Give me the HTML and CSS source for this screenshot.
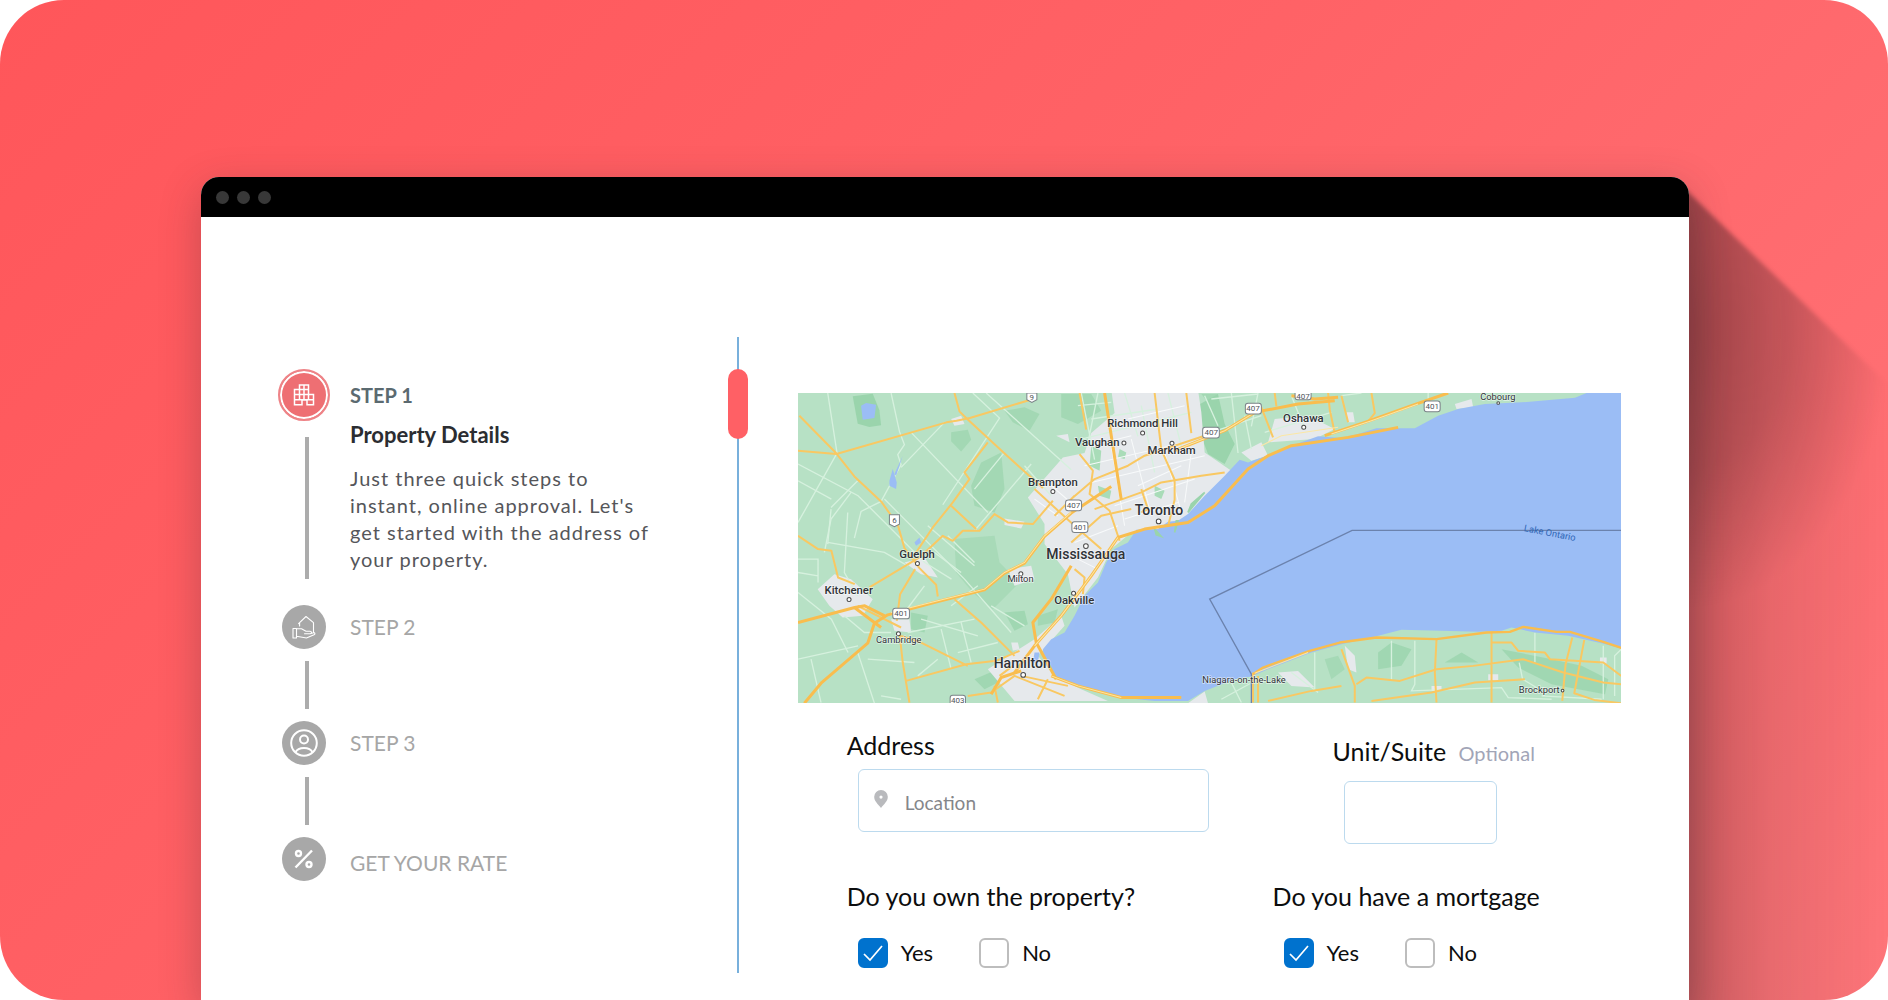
FILE: index.html
```html
<!DOCTYPE html>
<html lang="en">
<head>
<meta charset="utf-8">
<meta name="viewport" content="width=device-width, initial-scale=1">
<title>Property Details</title>
<link rel="stylesheet" href="styles.css">
</head>
<body>
<div class="stage">
  <div class="frame">
    <div class="long-shadow"></div>
    <div class="window">
      <header class="titlebar"><span class="dot"></span><span class="dot"></span><span class="dot"></span></header>
      <div class="content">
        <nav class="steps" aria-label="Application steps">
          <ol class="step-list">
            <li class="step step-active">
              <div class="marker">
                <span class="badge badge-active">
                  <svg width="26" height="26" viewBox="0 0 26 26" fill="none" stroke="#fff" stroke-width="1.5">
                    <path d="M8.500 7.500V3h9v9.500h5v10.200h-6.500V18h-5v4.700H3.500V7.500zM13 3v15M8.500 7.500V18M17.500 12.500V18M8.500 7.500h9M3.500 12.500h14M3.500 17.700h19"/>
                  </svg>
                </span>
                <span class="line"></span>
              </div>
              <div class="step-text">
                <p class="step-name">STEP 1</p>
                <h1 class="step-title">Property Details</h1>
                <p class="step-copy">Just three quick steps to<br>instant, online approval. Let's<br>get started with the address of<br>your property.</p>
              </div>
            </li>
            <li class="step">
              <div class="marker">
                <span class="badge">
                  <svg width="26" height="26" viewBox="0 0 26 26" fill="none" stroke="#fff" stroke-width="1.1" stroke-linejoin="round" stroke-linecap="round">
                    <path d="M8.600 12V8.600L15 2.500l7.500 6.200V18M8.600 8.600l-1 1M2 14.500h3.500V24H2zM5.500 14.800h5l4.500 2.400h4c2 0 2 2.600 0 2.600h-5.500M20 19.500l2.500-.8c1.500-.2 2 1.300.5 2.100L15.500 24 5.500 22.200"/>
                  </svg>
                </span>
                <span class="line"></span>
              </div>
              <div class="step-text"><p class="step-name">STEP 2</p></div>
            </li>
            <li class="step">
              <div class="marker">
                <span class="badge">
                  <svg width="30" height="30" viewBox="0 0 30 30" fill="none" stroke="#fff" stroke-width="2">
                    <circle cx="15" cy="15" r="12.800"/><circle cx="15" cy="11.500" r="4"/><path d="M6.500 24.200c1.500-3 5-4.200 8.500-4.200s7 1.200 8.500 4.200"/>
                  </svg>
                </span>
                <span class="line"></span>
              </div>
              <div class="step-text"><p class="step-name">STEP 3</p></div>
            </li>
            <li class="step step-last">
              <div class="marker">
                <span class="badge">
                  <svg width="24" height="24" viewBox="0 0 24 24" fill="none" stroke="#fff" stroke-width="2.400">
                    <circle cx="6.500" cy="6.500" r="2.500"/><circle cx="17" cy="17.500" r="2.500"/><path d="M20 3.500l-16.500 17"/>
                  </svg>
                </span>
              </div>
              <div class="step-text"><p class="step-name">GET YOUR RATE</p></div>
            </li>
          </ol>
        </nav>

        <div class="divider"><span class="pill"></span></div>

        <main class="details">
          <svg class="map" viewBox="21 22 2468 930" role="img" aria-label="Map of Lake Ontario and Toronto">
            <rect x="21" y="22" width="2468" height="930" fill="#b7e1c5"/>
            <g fill="#9ad4ac">
              <path d="M185 32l60-8 20 50 5 45-35 5-35-10z"/>
              <path d="M570 230l60-30 10 110-30 70-60-20-10-60z" opacity=".7"/>
              <path d="M480 140l50-8 10 30-30 35-30-30zM640 75l60-10 45 20-30 50-50-25z" opacity=".7"/>
              <path d="M490 460l120-10 15 80 60 60-80 80-60-50-50-60z" opacity=".5"/>
              <path d="M360 680l50 10-10 50-40-10zM640 680l60-5 10 40-40 20zM550 880l70-30 20 30-60 30z" opacity=".8"/>
              <path d="M1200 70l80-45 20 90 30 60-30 60-50-30z"/>
              <path d="M740 690l60-20-10 40-50 10zM1230 25l50 0-10 50zM810 25l90 0 30 50-70 40-50-20z" opacity=".7"/>
              <path d="M1760 800l40-30 60 20-30 50-70 10zM1960 830l50-30 50 30zM2130 790l150 30 90 20 80 40-10 45-160-30-100-50z" opacity=".8"/>
              <path d="M1600 820l40-10 20 40-40 30z" opacity=".6"/>
            </g>
            <g fill="#e6e9ec">
              <path d="M815 215L710 335l50 80v60l70 90 20 100 70-90 40-85 60-50 100-10 70-35 70-80 60-60-80-55-10-120-10-68H960l10 70-70 60-20 60z"/>
              <path d="M80 610l50-45 50 15 65 60-30 50-60 5-40-35zM340 530l60-15 40 60-50-10zM300 700l55 0 5 40-50-5zM590 850l140-90 80-70 10 30-80 90 50 60 80 40 80 35H670z"/>
              <path d="M480 100l30-10 10 25-30 5zM795 150l35-5 5 25zM660 770l20 0 5 20-20 5zM640 398l60 10-10 20-50-10zM650 550l70-10 10 40-60 20z"/>
              <path d="M1450 100l100-10 80 40-60 30-140 10zM1350 200l60-30 20 40-50 15zM1990 55l50-15 5 25-50 5zM1190 952l50-35 10 35zM1460 860l60-5 50 50-70-5z"/>
              <path d="M1665 80l20 0 5 30-20 0zM1660 780l30 30 5 50-25-10zM1920 900h30v15h-30zM2090 865h30v18h-30zM2425 815h20v18h-20z"/>
            </g>
            <g fill="#a9dcb8">
              <path d="M900 180l30 15-5 60-30-15zM1090 300l30 15-10 25-20-10zM920 300l40 15-5 25-30-10zM985 190l20 10-5 20-20-5z"/>
            </g>
            <g fill="none" stroke="#d6f1de" stroke-width="4">
              <path d="M110 22l28 180L21 410M300 22l25 115 15 40-20 30 10 30-60 110-60 30-20 80M21 235l180 95 200 200 80 50M21 285l100 55M200 285l-80 80M460 110L330 245M360 140l230 240M545 22l80 75-170 260M585 22l255 230M640 200l-90 110M280 340l240 240 140 160M110 470l170 30 70 40M720 235l-170 200M120 370l-10 105M700 240l80 90"/>
              <path d="M170 380l-10 180 40 70M21 520h60v70M21 620l100 80 50 100M200 800l50 152M21 820l180-40M160 690l60 50h80M60 820l30 130M230 820l140 10M450 730l30 120M510 710l30 120M350 740l200-40M400 600l-60 80M560 600l-80 60M600 660l100 60M500 800l120-30M270 930l60 10 M21 560l60 10M410 420l140 120M430 500l80 60M470 450l80 80M180 320l-60 80-20 100M390 700l170 50M380 870l60-50"/>
              <path d="M870 22l40 200M920 22l-30 150M900 100l200-30M870 160l330-80M1000 22l40 130M1050 60l40 200M1130 22l40 160M1230 150l180-60M1320 22l20 180M1400 22l-20 100M1280 120l-40-90M1500 30l40 100M1420 140l200-60M860 60l100-10M1260 40l140-15M1360 90l20 100"/>
              <path d="M1290 940l110-60M1320 890l30 60M1380 890v60M1570 800v110M1500 860l80 60M1800 765v120M1870 765v130l-10 20 270-10 20 30 130 5M2230 740v90M2183 830l10 50 50 30M2435 780v160M2489 790l-20 20v120M1650 30l60-8M1910 22v30M2250 930l180 10"/>
            </g>
            <g fill="none" stroke="#f8fafb" stroke-width="3">
              <path d="M880 240l300-70M900 290l340-80M960 180l40 240M1020 160l60 230M1120 200l50 180M970 360l240-80M1000 400l160-50M850 470l130-50M1200 200l-20 150M780 300l70 60M730 340l70 50M900 180l120-30M1010 100l170-40M860 520l60 30M1040 300l130-60"/>
            </g>
            <path fill="#9bbdf5" d="M2385 22l-35 14-160 14-110 5-80 15-60 20-70 38h-115l-55 17-50 12-70-5-80 28-60 25-70 25-25-8-45 48-60 60-50 55-30 20-30 3-30 22-65 2-25 38-40 20-25 40-25 60-40 40-30 60-30 50-40 20-25 30 5 40 30 40 80 30 120 35 100 10h100l50-30 90-35 50-8 50-22 130-50 90-25 90-20 90-23 120 3 110 3 70-3 30-10 70 15 100 10 100 22 59 16V22z"/>
            <g fill="#9bbdf5"><path d="M210 60l15-8 30 5-5 40-35 5zM305 250l12 40-2 20-20-10 0-15zM335 210l-20 60-5-5zM370 470l15-15 5 15-15 10zM730 800l15 0-5 30-15 0z"/></g>
            <g fill="#9ad4ac"><path d="M1160 405l-10 35 5-35zM1090 430l20 22-15-5zM1240 320l-50 60 10-25z" stroke="#9ad4ac" stroke-width="5"/></g>
            <g fill="none" stroke="#f9c862" stroke-width="6" stroke-linejoin="round">
              <path d="M25 90l110 112 55 70 80 75 50 70 20 70 45 60 50 50 5 35M21 195l115 10 330-95 30-5 40-8 190-57M490 22l15 55 20 20 130 120 100 90M590 170l-70 90 15 20-50 70-60 75-50 75"/>
              <path d="M235 605l150-90 70-65 30 15 30-30 50 0 45-50 40 25 75 5 60-70M480 360l75 70M21 450l60 40 40 5 20 80 50 20M345 885l180-50 90-10 70-30M490 640l80 70 100 100M330 750l60 20 140 70M325 740l10 90 20 120M372 550l-45 75 -10 80M200 660l130 65"/>
              <path d="M865 22l20 110M865 205l40 50-10 70 60 50 30 90M1090 22l20 170 40 90v60l-20 80M1185 22l15 120M840 340l70-60 100-40 50-30 180-60M910 370l140-50 60-30 120-20 70-10M840 470l90-80 90-20M730 310l120 110 80 70M850 330l-60 60M850 550l30 25-5 50"/>
              <path d="M1050 310l20 60-20 10M1410 65l35 90M1610 22l5 50 15 70M1450 22l5 40M1740 22l10 60-20 25M1650 30l20 80M1400 870v80M1385 860v90M1430 945l130-30 90-15M1650 790l40 110v50M1695 895l30-20 100 10 110-35 110-10 150-20 120 40 120 30 54 5M1935 760l-5 100 5 90M2100 740v210M2342 755l-20 80-10 110M2378 762l-30 160 60 20 81 10M1740 945l180-25 130-30 150-10 M2100 770h60l20 25 80 5 15 20 160 10 54 40"/>
              <path d="M625 870l40-30M600 920l70-50 150 60M690 870l140 30M770 880l-30 60M610 900l10 50M530 930l70-10"/>
            </g>
            <g fill="none" stroke="#f9bd4e" stroke-width="9" stroke-linejoin="round">
              <path d="M21 710l170-45 30-5 60 30M40 952l50-60 140-120 20-60 40-25 150-40 140-35 60-50 60-30 60-80 80-70 120-80M670 860l60-80 80-90 90-120 80-115 80-25 130-20 80-50 100-110 60-40 70-30 170-25 150-30M840 540l-60 100-55 70 10 60 60 110M190 665l80 60"/>
              <path d="M1150 195l150-60 90-55 130-25 110-10M940 22l50 320M1500 30l70 10 70-5M1600 150l120-40 140-50 110-38M780 870l80 30 130 35h180M600 925l30-50 60-20"/>
              <path d="M1385 865l30-20 140-50 90-25 110-15 180 5 150-20 70-2 40-15 100 15 40 0 100 30 59 20" stroke-width="7"/>
            </g>
            <g fill="none" stroke="#fbe7a6" stroke-width="3">
              <path d="M300 680l140-35 140-35 60-50 60-30 60-80 80-70M730 780l80-90 90-120 80-115M1410 180l60-30 170-25M1620 145l120-40 140-50M1160 190l140-55 90-55M780 870l80 30 130 35M1390 862l160-62"/>
            </g>
            <path fill="none" stroke="#6b82ad" stroke-width="4" d="M2489 434H1682L1255 640l125 225v87"/>
            <g fill="#fff" stroke="#7b8288" stroke-width="3">
              <path d="M707 22h30v20l-15 8-15-8zM295 387h30v28l-15 8-15-8z"/>
              <rect x="305" y="667" width="50" height="32" rx="8"/><rect x="477" y="928" width="46" height="40" rx="8"/>
              <rect x="823" y="343" width="48" height="32" rx="8"/><rect x="842" y="408" width="48" height="32" rx="8"/>
              <rect x="1234" y="125" width="50" height="32" rx="8"/><rect x="1362" y="53" width="48" height="32" rx="8"/>
              <rect x="1511" y="12" width="48" height="30" rx="8"/><rect x="1898" y="46" width="48" height="32" rx="8"/>
            </g>
            <g class="map-shield">
              <text x="722" y="42">9</text><text x="310" y="412">6</text><text x="330" y="692">401</text><text x="500" y="950">403</text>
              <text x="847" y="367">407</text><text x="866" y="432">401</text><text x="1260" y="149">407</text><text x="1385" y="77">407</text><text x="1535" y="40">407</text><text x="1922" y="70">401</text>
            </g>
            <g fill="#fff" stroke="#4a4a4a" stroke-width="3">
              <circle cx="785" cy="317" r="6"/><circle cx="379" cy="533" r="6"/><circle cx="174" cy="641" r="6"/><circle cx="322" cy="744" r="6"/><circle cx="689" cy="564" r="6"/><circle cx="696" cy="867" r="7"/>
              <circle cx="1054" cy="142" r="6"/><circle cx="998" cy="172" r="6"/><circle cx="1142" cy="173" r="6"/><circle cx="1102" cy="407" r="7"/><circle cx="884" cy="481" r="7"/><circle cx="847" cy="622" r="6"/><circle cx="1537" cy="125" r="6"/><circle cx="2120" cy="52" r="4"/><circle cx="2313" cy="914" r="4"/>
            </g>
            <g class="map-label map-city"><text x="1103" y="388">Toronto</text><text x="884" y="521">Mississauga</text><text x="693" y="846">Hamilton</text></g>
            <g class="map-label map-town"><text x="785" y="300">Brampton</text><text x="378" y="517">Guelph</text><text x="173" y="625">Kitchener</text><text x="849" y="656">Oakville</text><text x="1054" y="125">Richmond Hill</text><text x="918" y="181">Vaughan</text><text x="1141" y="205">Markham</text><text x="1536" y="109">Oshawa</text></g>
            <g class="map-label map-small"><text x="323" y="772">Cambridge</text><text x="688" y="590">Milton</text><text x="1358" y="892">Niagara-on-the-Lake</text><text x="2243" y="920">Brockport</text><text x="2119" y="42">Cobourg</text></g>
            <text class="map-label map-water" x="2275" y="451" transform="rotate(11 2275 441)">Lake Ontario</text>
          </svg>

          <form class="form">
            <div class="field">
              <label class="label" for="address">Address</label>
              <div class="control location">
                <svg class="pin" width="14" height="18" viewBox="0 0 14 18"><path fill="#b9babd" fill-rule="evenodd" d="M7 0a6.800 6.800 0 0 0-6.800 6.800C.2 11.500 4 14 7 18c3-4 6.800-6.500 6.800-11.200A6.800 6.800 0 0 0 7 0zm0 5.500a1.600 1.600 0 1 1 0 3.200 1.600 1.600 0 0 1 0-3.200z"/></svg>
                <input class="input" id="address" type="text" placeholder="Location">
              </div>
            </div>
            <div class="field field-unit">
              <label class="label" for="unit">Unit/Suite <span class="optional">Optional</span></label>
              <div class="control unit"><input class="input" id="unit" type="text"></div>
            </div>
            <fieldset class="question">
              <legend class="label">Do you own the property?</legend>
              <div class="choices">
                <label class="choice"><input class="check" type="checkbox" checked>Yes</label>
                <label class="choice"><input class="check" type="checkbox">No</label>
              </div>
            </fieldset>
            <fieldset class="question">
              <legend class="label">Do you have a mortgage</legend>
              <div class="choices">
                <label class="choice"><input class="check" type="checkbox" checked>Yes</label>
                <label class="choice"><input class="check" type="checkbox">No</label>
              </div>
            </fieldset>
          </form>
        </main>
      </div>
    </div>
  </div>
</div>
</body>
</html>
```
FILE: styles.css
```css
* { box-sizing: border-box; }
body, p, h1, ol, fieldset, legend { margin: 0; padding: 0; }
body { background: #fff; font-family: Lato, "Open Sans", sans-serif; color: #0c0d0e; }

.stage {
  display: flex;
  min-height: 100vh;
  padding: 177px 199px 0 201px;
  border-radius: 64px;
  overflow: hidden;
  background: linear-gradient(135deg, #ff565a, #ff6266 45%, #ff767a);
}
.frame { position: relative; display: flex; flex: 1; min-width: 0; }
.window {
  position: relative;
  flex: 1;
  min-width: 0;
  display: flex;
  flex-direction: column;
  background: #fff;
  border-radius: 18px 18px 0 0;
  box-shadow: 0 12px 40px rgba(70, 40, 50, .3);
}
/* diagonal cast shadow to the right of the window */
.long-shadow { position: absolute; top: 12px; bottom: -20px; left: calc(100% - 4px); width: 220px; filter: blur(2px); }
.long-shadow::before {
  content: "";
  display: block;
  height: 100%;
  clip-path: polygon(0 0, 100% 212px, 100% 100%, 0 100%);
  background:
    radial-gradient(205px 280px at 0 140px, rgba(40, 20, 25, .28), rgba(40, 20, 25, .2) 50%, transparent),
    linear-gradient(90deg, rgba(50, 25, 30, .34), rgba(60, 30, 35, .22) 18%, rgba(70, 40, 45, .12) 40%, transparent 95%);
}

.titlebar { display: flex; gap: 8px; align-items: center; height: 40px; padding: 0 15px; background: #000; border-radius: 18px 18px 0 0; }
.dot { width: 13px; height: 13px; border-radius: 50%; background: #383838; }

.content { flex: 1; display: grid; grid-template-columns: 36% 2px 1fr; }

.steps { padding: 152px 40px 40px 77px; }
.step-list { list-style: none; }
.step { display: flex; gap: 20px; color: #a6a6a6; }
.marker { flex: none; display: flex; flex-direction: column; align-items: center; width: 52px; }
.badge { display: flex; align-items: center; justify-content: center; width: 44px; height: 44px; border-radius: 50%; background: #a8a8a8; }
.badge-active { width: 52px; height: 52px; background: #ee6f73; border: 2px solid #ee8387; box-shadow: inset 0 0 0 2px #fff; }
.line { width: 4px; height: 48px; margin: 12px 0 12px 6px; background: #acacac; }
.step-active .line { height: 142px; margin: 16px 0 26px 6px; }
.step-name { font-size: 21px; line-height: 44px; }
.step-last .step-name { padding-top: 4px; }
.step-active .step-name { font-size: 20px; line-height: 52px; font-weight: 700; color: #5b6a70; }
.step-title { font-size: 22px; line-height: 28px; font-weight: 700; color: #2b2d31; }
.step-copy { margin-top: 16px; font-size: 20px; line-height: 27px; letter-spacing: 1px; color: #55565a; }

.divider { position: relative; margin: 120px 0 27px; background: #78b0dc; }
.pill { position: absolute; top: 32px; left: -9px; width: 20px; height: 70px; border-radius: 10px; background: #ff6065; }

.details { padding: 176px 68px 30px 59px; }
.map { display: block; width: 100%; height: auto; }
.map-label { font-family: Roboto, sans-serif; fill: #2f3237; text-anchor: middle; paint-order: stroke; stroke: rgba(255, 255, 255, .6); stroke-width: 4px; }
.map-city { font-size: 42px; font-weight: 500; }
.map-town { font-size: 34px; font-weight: 500; }
.map-small { font-size: 28px; }
.map-water { font-size: 28px; fill: #2f66b5; stroke: none; }
.map-shield { font-family: Roboto, sans-serif; font-size: 24px; fill: #50545a; text-anchor: middle; }

.form { display: grid; grid-template-columns: 55% 45%; row-gap: 36px; padding: 26px 0 0 49px; }
.field { display: flex; flex-direction: column; gap: 8px; }
.field-unit { padding: 6px 0 0 60px; gap: 12px; }
.label { font-size: 25px; line-height: 32px; color: #0c0d0e; }
.optional { margin-left: 6px; font-size: 20px; color: #a2a5b7; }
.control { display: flex; align-items: center; height: 63px; margin-left: 11px; border: 1px solid #bcdaee; border-radius: 6px; background: #fff; }
.location { width: 351px; padding: 0 15px; gap: 17px; }
.unit { width: 153px; padding: 0 15px; }
.pin { flex: none; margin-bottom: 4px; }
.input { flex: 1; min-width: 0; width: 100%; height: 100%; padding: 4px 0 0; border: 0; outline: 0; background: none; font: inherit; font-size: 19px; color: #0c0d0e; }
.input::placeholder { color: #85868a; opacity: 1; }

.question { border: 0; min-width: 0; }
.choices { display: flex; gap: 46px; padding: 26px 0 0 11px; }
.choice { display: flex; align-items: center; gap: 13px; font-size: 22px; line-height: 30px; }
.check { appearance: none; width: 30px; height: 30px; margin: 0; border: 2px solid #bdbdbd; border-radius: 6px; background: #fff; }
.check:checked {
  border-color: #0072ce;
  background: #0072ce url("data:image/svg+xml,%3Csvg xmlns='http://www.w3.org/2000/svg' viewBox='0 0 26 26'%3E%3Cpath d='M4 14l6 6L22 6' fill='none' stroke='white' stroke-width='1.700'/%3E%3C/svg%3E") center / 26px no-repeat;
}
```
